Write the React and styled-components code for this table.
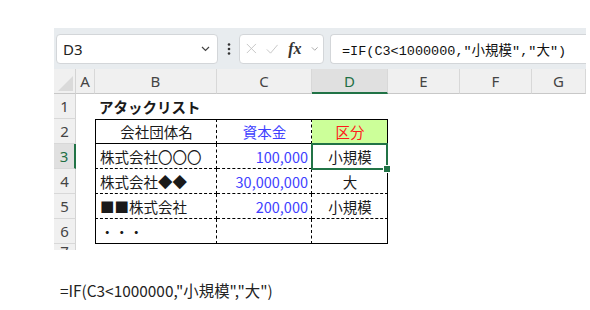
import React from 'react';
import styled, { createGlobalStyle } from 'styled-components';

const GlobalStyle = createGlobalStyle`
  html, body { margin: 0; padding: 0; background: #fff; }
  body { font-family: "Noto Sans", "Noto Sans CJK JP", sans-serif; }
`;

const Page = styled.div`
  width: 590px;
  height: 310px;
  padding: 28px 0 0 54px;
  box-sizing: border-box;
  overflow: hidden;
`;

const Sheet = styled.div`
  width: 532px;
`;

const Toolbar = styled.div`
  display: flex;
  align-items: center;
  height: 41px;
  padding: 0 0 0 2px;
  background: #e8ecef;
  box-sizing: border-box;
`;

const Box = styled.div`
  display: flex;
  align-items: center;
  height: 30px;
  background: #fff;
  border: 1px solid #d3d6d9;
  border-radius: 4px;
  box-sizing: border-box;
`;

const NameBox = styled(Box)`
  width: 162px;
  padding: 0 7px 0 6px;
  justify-content: space-between;
  font-size: 15px;
  color: #222;
`;

const Kebab = styled.div`
  width: 21px;
  display: flex;
  justify-content: center;
`;

const FxGroup = styled(Box)`
  width: 85px;
  padding: 0 5px 0 6px;
  gap: 9px;
`;

const Fx = styled.span`
  font-family: "Liberation Serif", serif;
  font-style: italic;
  font-weight: 700;
  font-size: 16px;
  color: #333;
  margin-left: 1px;
`;

const FormulaBox = styled(Box)`
  flex: 1;
  margin-left: 6px;
  border-right: none;
  border-radius: 4px 0 0 4px;
  padding-left: 11px;
  font-family: "Liberation Mono", "Noto Sans CJK JP", monospace;
  font-size: 13.5px;
  color: #111;
  white-space: nowrap;
`;

const Grid = styled.div`
  display: grid;
  grid-template-columns: 22px 19px 122px 95px 76px 72px 72px 1fr;
  grid-auto-rows: 25px;
  height: 181px;
  overflow: hidden;
  background: #fff;
`;

const Corner = styled.div`
  background: #f0f0f0;
  border-right: 1px solid #d4d4d4;
  border-bottom: 1px solid #c8c8c8;
  position: relative;
  overflow: hidden;
  &::after {
    content: '';
    position: absolute;
    right: 2px;
    bottom: 2px;
    border-style: solid;
    border-width: 0 0 15px 15px;
    border-color: transparent transparent #dadada transparent;
  }
`;

const ColHead = styled.div`
  display: flex;
  align-items: center;
  justify-content: center;
  background: ${p => (p.$active ? '#e0e0e0' : '#f0f0f0')};
  border-right: 1px solid #d8d8d8;
  border-bottom: ${p => (p.$active ? '2px solid #217346' : '1px solid #c8c8c8')};
  font-size: 15px;
  color: ${p => (p.$active ? '#1f6f45' : '#444')};
  box-sizing: border-box;
`;

const RowHead = styled.div`
  display: flex;
  align-items: ${p => (p.$partial ? 'flex-start' : 'center')};
  justify-content: center;
  background: ${p => (p.$active ? '#e0e0e0' : '#f0f0f0')};
  border-bottom: 1px solid #d8d8d8;
  border-right: ${p => (p.$active ? '2px solid #217346' : '1px solid #d4d4d4')};
  font-size: 15px;
  line-height: ${p => (p.$partial ? '10px' : 'normal')};
  padding-top: ${p => (p.$partial ? '2px' : '0')};
  color: ${p => (p.$active ? '#1f6f45' : '#444')};
  box-sizing: border-box;
  overflow: hidden;
`;

const Cell = styled.div`
  display: flex;
  align-items: center;
  justify-content: ${p => (p.$align === 'right' ? 'flex-end' : p.$align === 'center' ? 'center' : 'flex-start')};
  padding: 0 3px 0 4px;
  box-sizing: border-box;
  font-family: "Noto Sans CJK JP", sans-serif;
  font-size: 14.5px;
  font-weight: ${p => (p.$bold ? 700 : 400)};
  color: ${p => p.$color || '#1a1a1a'};
  background: ${p => p.$bg || '#fff'};
  border-top: ${p => p.$bt || 'none'};
  border-left: ${p => p.$bl || 'none'};
  border-right: ${p => p.$br || 'none'};
  border-bottom: ${p => p.$bb || 'none'};
  white-space: nowrap;
  position: ${p => (p.$selected ? 'relative' : 'static')};
`;

const Selection = styled.div`
  position: absolute;
  top: -1px;
  left: -1px;
  right: -1px;
  bottom: -2px;
  border: 2px solid #217346;
  z-index: 2;
  &::after {
    content: '';
    position: absolute;
    right: -5px;
    bottom: -5px;
    width: 6px;
    height: 6px;
    background: #217346;
    border: 1px solid #fff;
  }
`;

const Note = styled.div`
  margin: 29px 0 0 6px;
  font-family: "Noto Sans CJK JP", sans-serif;
  font-size: 15.4px;
  color: #222;
  white-space: nowrap;
`;

const Chevron = ({ color = '#444' }) => (
  <svg width="9" height="6" viewBox="0 0 9 6">
    <path d="M1 1l3.5 3.5L8 1" fill="none" stroke={color} strokeWidth="1.2" />
  </svg>
);

const Dots = () => (
  <svg width="4" height="12" viewBox="0 0 4 12">
    <circle cx="2" cy="1.5" r="1.3" fill="#333" />
    <circle cx="2" cy="6" r="1.3" fill="#333" />
    <circle cx="2" cy="10.5" r="1.3" fill="#333" />
  </svg>
);

const XIcon = () => (
  <svg width="13" height="13" viewBox="0 0 13 13">
    <path d="M1 1l11 11M12 1L1 12" stroke="#c2c2c2" strokeWidth="1.1" />
  </svg>
);

const CheckIcon = () => (
  <svg width="15" height="12" viewBox="0 0 15 12">
    <path d="M1 6.5l4.5 4.5L14 1" fill="none" stroke="#c2c2c2" strokeWidth="1.1" />
  </svg>
);

const COLS = ['A', 'B', 'C', 'D', 'E', 'F', 'G'];
const BLUE = '#4040ff';
const SOLID = '1px solid #000';
const DASH = '1px dashed #000';

const data = {
  1: { B: { text: 'アタックリスト', bold: true, align: 'left' } },
  2: {
    B: { text: '会社団体名', align: 'center' },
    C: { text: '資本金', align: 'center', color: BLUE },
    D: { text: '区分', align: 'center', color: '#ff1a1a', bg: '#ccff99' },
  },
  3: {
    B: { text: '株式会社〇〇〇' },
    C: { text: '100,000', align: 'right', color: BLUE },
    D: { text: '小規模', align: 'center' },
  },
  4: {
    B: { text: '株式会社◆◆' },
    C: { text: '30,000,000', align: 'right', color: BLUE },
    D: { text: '大', align: 'center' },
  },
  5: {
    B: { text: '■■株式会社' },
    C: { text: '200,000', align: 'right', color: BLUE },
    D: { text: '小規模', align: 'center' },
  },
  6: { B: { text: '・・・' } },
};

const borders = (row, col) => {
  if (row < 2 || row > 6 || !['B', 'C', 'D'].includes(col)) return {};
  return {
    $bt: row === 2 ? SOLID : undefined,
    $bl: col === 'B' ? SOLID : undefined,
    $br: col === 'D' ? SOLID : DASH,
    $bb: row === 2 || row === 6 ? SOLID : DASH,
  };
};

const formula = '=IF(C3<1000000,"小規模","大")';

export default function App() {
  const rows = [1, 2, 3, 4, 5, 6, 7];
  return (
    <Page>
      <GlobalStyle />
      <Sheet>
        <Toolbar>
          <NameBox>
            <span>D3</span>
            <Chevron />
          </NameBox>
          <Kebab>
            <Dots />
          </Kebab>
          <FxGroup>
            <XIcon />
            <CheckIcon />
            <Fx>fx</Fx>
            <Chevron color="#aaa" />
          </FxGroup>
          <FormulaBox>{formula}</FormulaBox>
        </Toolbar>
        <Grid>
          <Corner />
          {COLS.map(c => (
            <ColHead key={c} $active={c === 'D'}>{c}</ColHead>
          ))}
          {rows.map(r => (
            <React.Fragment key={r}>
              <RowHead $active={r === 3} $partial={r === 7}>{r}</RowHead>
              {COLS.map(c => {
                const cell = (data[r] && data[r][c]) || {};
                const selected = r === 3 && c === 'D';
                return (
                  <Cell
                    key={c}
                    $align={cell.align}
                    $color={cell.color}
                    $bg={cell.bg}
                    $bold={cell.bold}
                    $selected={selected}
                    {...borders(r, c)}
                  >
                    {cell.text}
                    {selected && <Selection />}
                  </Cell>
                );
              })}
            </React.Fragment>
          ))}
        </Grid>
      </Sheet>
      <Note>{formula}</Note>
    </Page>
  );
}
